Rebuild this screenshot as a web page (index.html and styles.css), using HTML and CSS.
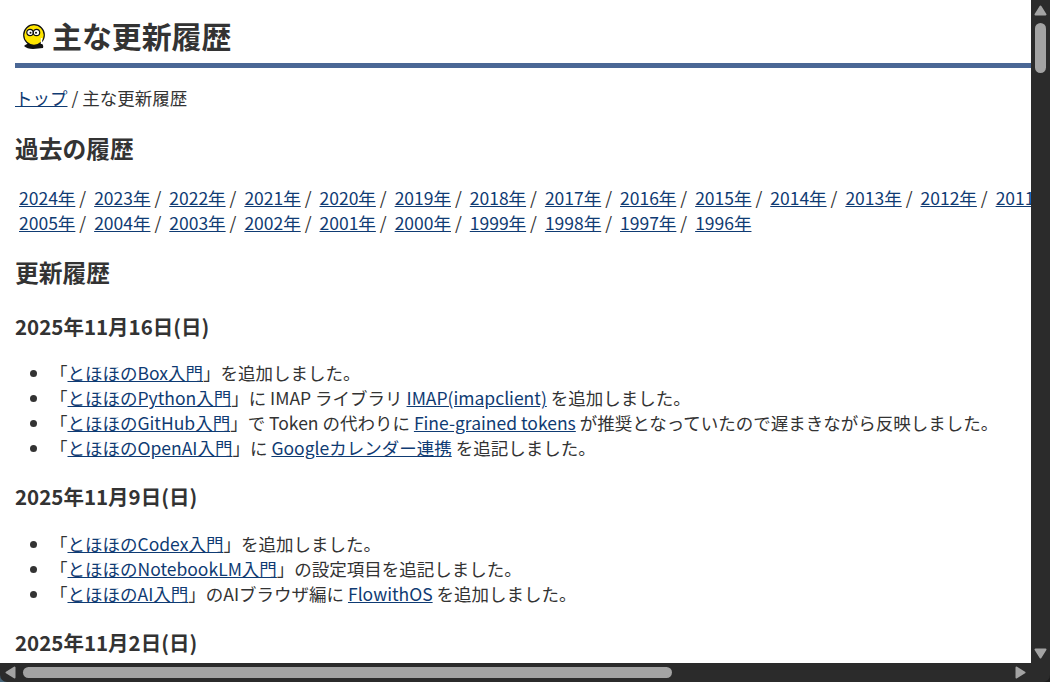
FILE: index.html
```html
<!DOCTYPE html>
<html lang="ja">
  <head>
    <meta charset="UTF-8" />
    <title>主な更新履歴</title>
    <link rel="stylesheet" href="styles.css">
  </head>
  <body>
    <div class="window">
      <div class="page">
        <h1 class="title">
          <svg class="logo" width="26" height="26" viewBox="0 0 26 26">
            <path d="M4 22 Q7 19 12 19 L21 19 Q24 21 23 24 L13 25 Q7 25 4 22Z" fill="#111" />
            <circle cx="14" cy="11" r="10.3" fill="#ffe600" stroke="#111" stroke-width="1.2" />
            <circle cx="10" cy="8.5" r="3.2" fill="#fff" stroke="#111" stroke-width="1.2" />
            <circle cx="16.5" cy="8.5" r="3.2" fill="#fff" stroke="#111" stroke-width="1.2" />
            <circle cx="10.5" cy="8.8" r="1" fill="#111" />
            <circle cx="16" cy="8.8" r="1" fill="#111" />
            <path d="M21.5 14 L21.5 20" stroke="#fff" stroke-width="1.4" />
          </svg>
          主な更新履歴
        </h1>
        <p class="crumbs"><a href="#">トップ</a> / 主な更新履歴</p>

        <h2>過去の履歴</h2>
        <div class="years">
          <div class="year-row">
            <a href="#">2024年</a><i>/</i><a href="#">2023年</a><i>/</i><a href="#">2022年</a><i>/</i><a href="#">2021年</a><i>/</i><a href="#">2020年</a><i>/</i><a href="#">2019年</a><i>/</i><a href="#">2018年</a><i>/</i><a href="#">2017年</a><i>/</i><a href="#">2016年</a><i>/</i><a href="#">2015年</a><i>/</i><a href="#">2014年</a><i>/</i><a href="#">2013年</a><i>/</i><a href="#">2012年</a><i>/</i><a href="#">2011年</a>
          </div>
          <div class="year-row">
            <a href="#">2005年</a><i>/</i><a href="#">2004年</a><i>/</i><a href="#">2003年</a><i>/</i><a href="#">2002年</a><i>/</i><a href="#">2001年</a><i>/</i><a href="#">2000年</a><i>/</i><a href="#">1999年</a><i>/</i><a href="#">1998年</a><i>/</i><a href="#">1997年</a><i>/</i><a href="#">1996年</a>
          </div>
        </div>

        <h2>更新履歴</h2>

        <h3>2025年11月16日(日)</h3>
        <ul>
          <li>「<a href="#">とほほのBox入門</a>」を追加しました。</li>
          <li>「<a href="#">とほほのPython入門</a>」に IMAP ライブラリ <a href="#">IMAP(imapclient)</a> を追加しました。</li>
          <li>「<a href="#">とほほのGitHub入門</a>」で Token の代わりに <a href="#">Fine-grained tokens</a> が推奨となっていたので遅まきながら反映しました。</li>
          <li>「<a href="#">とほほのOpenAI入門</a>」に <a href="#">Googleカレンダー連携</a> を追記しました。</li>
        </ul>

        <h3>2025年11月9日(日)</h3>
        <ul>
          <li>「<a href="#">とほほのCodex入門</a>」を追加しました。</li>
          <li>「<a href="#">とほほのNotebookLM入門</a>」の設定項目を追記しました。</li>
          <li>「<a href="#">とほほのAI入門</a>」のAIブラウザ編に <a href="#">FlowithOS</a> を追加しました。</li>
        </ul>

        <h3>2025年11月2日(日)</h3>
      </div>

      <div class="vbar">
        <svg class="arrow" width="13" height="11" viewBox="0 0 13 11"><path d="M6.5 1.5 L11.5 9.5 L1.5 9.5Z" /></svg>
        <span class="vtrack"><span class="vthumb"></span></span>
        <svg class="arrow" width="13" height="11" viewBox="0 0 13 11"><path d="M1.5 1.5 L11.5 1.5 L6.5 9.5Z" /></svg>
      </div>

      <div class="hbar">
        <svg class="arrow" width="11" height="13" viewBox="0 0 11 13"><path d="M9.5 1.5 L9.5 11.5 L1.5 6.5Z" /></svg>
        <span class="htrack"><span class="hthumb"></span></span>
        <svg class="arrow" width="11" height="13" viewBox="0 0 11 13"><path d="M1.5 1.5 L9.5 6.5 L1.5 11.5Z" /></svg>
      </div>
      <div class="corner"></div>
    </div>
  </body>
</html>
```

FILE: styles.css
```css
* {
  font-family: "Noto Sans CJK JP", "Noto Sans", sans-serif;
}

html,
body {
  margin: 0;
  padding: 0;
  height: 100%;
  overflow: hidden;
}

html {
  background: linear-gradient(to right, #48667a 50%, #1c1c1c 50%);
}

body {
  color: #333;
  font-size: 17.5px;
  line-height: 25px;
}

a {
  color: #0f3b73;
  text-decoration: underline;
}

.window {
  display: grid;
  grid-template-columns: 1031px 19px;
  grid-template-rows: 663px 19px;
  height: 682px;
  background-color: #2b2b2b;
  border-radius: 0 0 7px 7px;
  overflow: hidden;
}

.page {
  background-color: #fff;
  overflow: hidden;
  padding: 15px 0 0 15px;
  white-space: nowrap;
}

.title {
  display: flex;
  align-items: flex-start;
  gap: 6px;
  margin: 0 0 17px;
  padding: 0 0 4px 5px;
  height: 44px;
  border-bottom: 5px solid #4a6795;
  font-size: 29.9px;
  line-height: 40px;
  font-weight: bold;
}

.logo {
  flex: none;
  margin-top: 9px;
}

.crumbs {
  margin: 0 0 22px;
}

h2 {
  margin: 0 0 21px;
  font-size: 23.76px;
  line-height: 32px;
  font-weight: bold;
}

.years {
  padding-left: 4px;
  margin-bottom: 21px;
}

.year-row i {
  font-style: normal;
  margin: 0 7.9px 0 4px;
}

h2 + h3 {
  margin-top: 24px;
}

h3 {
  margin: 0 0 19.4px;
  font-size: 20.5px;
  line-height: 29px;
  font-weight: bold;
}

ul {
  margin: 0 0 22px;
  padding: 0 0 0 35px;
}

.vbar {
  display: flex;
  flex-direction: column;
  align-items: center;
  padding: 5px 0 4px;
}

.hbar {
  display: flex;
  align-items: center;
  padding: 0 5px 0 5px;
}

.vtrack {
  flex: 1;
  padding: 7px 0;
}

.vthumb {
  display: block;
  width: 11px;
  height: 50px;
  background-color: #a3a3a3;
  border-radius: 6px;
}

.htrack {
  flex: 1;
  padding: 0 7px;
}

.hthumb {
  display: block;
  width: 649px;
  height: 11px;
  background-color: #a3a3a3;
  border-radius: 6px;
}

.arrow {
  display: block;
  flex: none;
  fill: #a3a3a3;
  stroke: #a3a3a3;
  stroke-width: 2;
  stroke-linejoin: round;
}
```
